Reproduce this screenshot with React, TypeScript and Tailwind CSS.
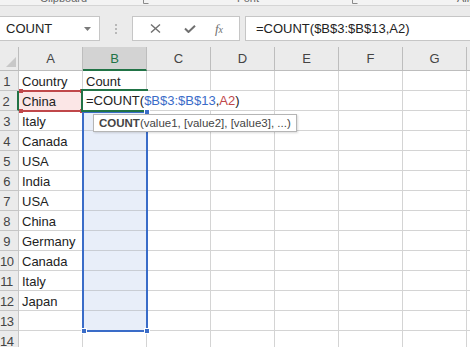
import React from "react";

const cols = ["A", "B", "C", "D", "E", "F", "G"];
const countries = ["Country", "China", "Italy", "Canada", "USA", "India", "USA", "China", "Germany", "Canada", "Italy", "Japan", "", ""];

function Launcher() {
  return (
    <svg width="6" height="4" viewBox="0 0 6 4" className="block">
      <path d="M0.5 0 V3.5 H5.5" stroke="#8a8a8a" strokeWidth="1" fill="none" />
    </svg>
  );
}

function Handle({ color }: { color: string }) {
  return <div className="w-[6px] h-[6px] border border-white" style={{ background: color }} />;
}

export default function App() {
  return (
    <div className="w-[470px] h-[347px] overflow-hidden bg-[#ebebeb] font-['Liberation_Sans',Arial,sans-serif] text-[#222]">
      {/* Ribbon group labels (cut off at the top) */}
      <div className="h-[6px] bg-[#f3f3f3] border-b border-[#d5d5d5] flex items-end overflow-hidden text-[11px] leading-[12px] text-[#666]">
        <span className="ml-[40px] w-[103px] shrink-0 mb-[1px]">Clipboard</span>
        <span className="w-[94px] shrink-0 self-start"><Launcher /></span>
        <span className="w-[115px] shrink-0 mb-[1px]">Font</span>
        <span className="w-[105px] shrink-0 self-start"><Launcher /></span>
        <span className="shrink-0 mb-[1px] whitespace-nowrap">Alignment</span>
      </div>

      {/* Name box + formula bar */}
      <div className="mt-[10px] h-[25px] flex">
        <div className="w-[100px] shrink-0 bg-white border border-l-0 border-[#c6c6c6] flex items-center justify-between pl-[6px] pr-[8px]">
          <span className="text-[13px] text-[#222]">COUNT</span>
          <svg width="7" height="4" viewBox="0 0 7 4">
            <path d="M0 0 H7 L3.5 4 Z" fill="#7a7a7a" />
          </svg>
        </div>
        <div className="w-[32px] shrink-0 flex flex-col items-center justify-center gap-[2px]">
          <div className="w-[2px] h-[2px] bg-[#b8b8b8]" />
          <div className="w-[2px] h-[2px] bg-[#b8b8b8]" />
          <div className="w-[2px] h-[2px] bg-[#b8b8b8]" />
        </div>
        <div className="w-[108px] shrink-0 bg-white border border-[#c6c6c6] flex items-center text-[#707070]">
          <div className="w-[44px] flex justify-center">
            <svg width="11" height="9" viewBox="0 0 11 9">
              <path d="M1 0.5 L10 8.5 M10 0.5 L1 8.5" stroke="#707070" strokeWidth="1.4" />
            </svg>
          </div>
          <div className="w-[26px] flex justify-center">
            <svg width="12" height="8" viewBox="0 0 12 8">
              <path d="M1 3.5 L4.5 7 L11 0.8" stroke="#707070" strokeWidth="2" fill="none" />
            </svg>
          </div>
          <div className="flex-1 flex justify-center pr-[4px] font-['Liberation_Serif',serif] italic text-[13px] leading-none">
            f<span className="text-[10px] mt-[3px]">x</span>
          </div>
        </div>
        <div className="w-[5px] shrink-0" />
        <div className="flex-1 bg-white border border-r-0 border-[#c6c6c6] flex items-center pl-[10px] text-[13px] text-[#222]">
          =COUNT($B$3:$B$13,A2)
        </div>
      </div>

      {/* Column headers */}
      <div className="mt-[6px] h-[24px] flex text-[13px] text-[#444]">
        <div className="w-[19px] shrink-0 border-r border-b border-[#bdbdbd] flex items-end justify-end pr-[2px] pb-[3px]">
          <svg width="10" height="10" viewBox="0 0 10 10">
            <path d="M10 0 V10 H0 Z" fill="#c8c8c8" />
          </svg>
        </div>
        {cols.map((c) => (
          <div
            key={c}
            className={
              c === "B"
                ? "w-[64px] shrink-0 bg-[#d3d3d3] border-r border-[#bdbdbd] border-b-2 border-b-[#217346] text-[#217346] flex items-center justify-center pt-[1px]"
                : "w-[64px] shrink-0 border-r border-b border-[#bdbdbd] flex items-center justify-center"
            }
          >
            {c}
          </div>
        ))}
        <div className="flex-1 border-b border-[#bdbdbd]" />
      </div>

      {/* Grid */}
      <div className="relative">
        {countries.map((country, i) => {
          const r = i + 1;
          const inRange = r >= 3 && r <= 13;
          return (
            <div key={r} className="flex h-[20px] text-[13px] leading-[21px]">
              <div
                className={
                  r === 2
                    ? "w-[19px] shrink-0 border-r-2 border-r-[#217346] border-b border-b-[#c6c6c6] text-[#444] text-center pr-[5px]"
                    : "w-[19px] shrink-0 border-r border-b border-[#c6c6c6] text-[#444] text-center pr-[5px] tracking-[-0.5px]"
                }
              >
                {r}
              </div>
              <div
                className={
                  r === 2
                    ? "w-[64px] shrink-0 bg-[#fbe6e6] border-r border-b border-[#d4d4d4] pl-[3px] whitespace-nowrap"
                    : "w-[64px] shrink-0 bg-white border-r border-b border-[#d4d4d4] pl-[3px] whitespace-nowrap"
                }
              >
                {country}
              </div>
              <div
                className={
                  inRange
                    ? "w-[64px] shrink-0 bg-[#e8eef9] border-r border-b border-[#c9cdd4] pl-[3px]"
                    : "w-[64px] shrink-0 bg-white border-r border-b border-[#d4d4d4] pl-[3px]"
                }
              >
                {r === 1 ? "Count" : ""}
              </div>
              {cols.slice(2).map((c) => (
                <div key={c} className="w-[64px] shrink-0 bg-white border-r border-b border-[#d4d4d4]" />
              ))}
              <div className="flex-1 bg-white border-b border-[#d4d4d4]" />
            </div>
          );
        })}

        {/* A2 reference highlight */}
        <div className="absolute left-[20px] top-[19px] w-[63px] h-[22px] border-y-2 border-[#c0474a]" />
        <div className="absolute left-[19px] top-[18px] w-[4px] h-[4px] bg-[#c0474a]" />
        <div className="absolute left-[19px] top-[38px] w-[4px] h-[4px] bg-[#c0474a]" />
        <div className="absolute left-[80px] top-[18px] w-[4px] h-[4px] bg-[#c0474a]" />
        <div className="absolute left-[80px] top-[38px] w-[4px] h-[4px] bg-[#c0474a]" />

        {/* B3:B13 range */}
        <div className="absolute left-[82px] top-[40px] w-[66px] h-[221px] border-2 border-[#3a6cc8]" />
        <div className="absolute left-[81px] top-[257px]"><Handle color="#3a6cc8" /></div>
        <div className="absolute left-[144px] top-[257px]"><Handle color="#3a6cc8" /></div>

        {/* In-cell editor for B2 */}
        <div className="absolute left-[83px] top-[20px] w-[158px] h-[19px] bg-white" />
        <div className="absolute left-[81px] top-[18px] w-[67px] h-[23px] border-y-2 border-l-2 border-[#217346]" />
        <div className="absolute left-[83px] top-[20px] text-[13px] leading-[20px] pl-[3px] whitespace-nowrap">
          =COUNT(<span className="text-[#3a6cc8]">$B$3:$B$13</span>,<span className="text-[#c0474a]">A2</span>)
        </div>
        <div className="absolute left-[144px] top-[38px]"><Handle color="#3a6cc8" /></div>

        {/* Function tooltip */}
        <div className="absolute left-[93px] top-[43px] h-[18px] bg-white border border-[#b5b5b5] shadow-[1px_1px_2px_rgba(0,0,0,0.15)] px-[5px] text-[11.5px] leading-[16px] text-[#444] whitespace-nowrap">
          <span className="font-bold">COUNT</span>(value1, [value2], [value3], ...)
        </div>
      </div>
    </div>
  );
}
